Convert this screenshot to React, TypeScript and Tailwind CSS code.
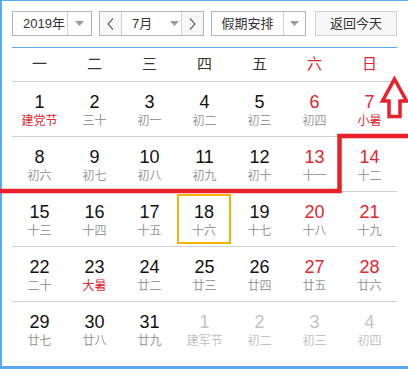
import React from 'react';

type Day = { n: number; l: string; red?: boolean; fest?: boolean; other?: boolean; today?: boolean };

const weeks: Day[][] = [
  [
    { n: 1, l: '建党节', fest: true },
    { n: 2, l: '三十' },
    { n: 3, l: '初一' },
    { n: 4, l: '初二' },
    { n: 5, l: '初三' },
    { n: 6, l: '初四', red: true },
    { n: 7, l: '小暑', red: true, fest: true },
  ],
  [
    { n: 8, l: '初六' },
    { n: 9, l: '初七' },
    { n: 10, l: '初八' },
    { n: 11, l: '初九' },
    { n: 12, l: '初十' },
    { n: 13, l: '十一', red: true },
    { n: 14, l: '十二', red: true },
  ],
  [
    { n: 15, l: '十三' },
    { n: 16, l: '十四' },
    { n: 17, l: '十五' },
    { n: 18, l: '十六', today: true },
    { n: 19, l: '十七' },
    { n: 20, l: '十八', red: true },
    { n: 21, l: '十九', red: true },
  ],
  [
    { n: 22, l: '二十' },
    { n: 23, l: '大暑', fest: true },
    { n: 24, l: '廿二' },
    { n: 25, l: '廿三' },
    { n: 26, l: '廿四' },
    { n: 27, l: '廿五', red: true },
    { n: 28, l: '廿六', red: true },
  ],
  [
    { n: 29, l: '廿七' },
    { n: 30, l: '廿八' },
    { n: 31, l: '廿九' },
    { n: 1, l: '建军节', other: true },
    { n: 2, l: '初二', other: true },
    { n: 3, l: '初三', other: true },
    { n: 4, l: '初四', other: true },
  ],
];

const weekdays = ['一', '二', '三', '四', '五', '六', '日'];

const Caret = () => (
  <svg width="9" height="5" viewBox="0 0 9 5">
    <path d="M0 0 L9 0 L4.5 5 Z" fill="#9a9a9a" />
  </svg>
);

const Chevron = ({ dir }: { dir: 'left' | 'right' }) => (
  <svg width="7" height="12" viewBox="0 0 7 12">
    <path
      d={dir === 'left' ? 'M6 0.5 L1 6 L6 11.5' : 'M1 0.5 L6 6 L1 11.5'}
      fill="none"
      stroke="#666"
      strokeWidth="1.2"
    />
  </svg>
);

const DayCell = ({ d }: { d: Day }) => {
  const numColor = d.other ? 'text-[#c2c2c2]' : d.red ? 'text-[#e0262f]' : 'text-[#111]';
  const lunarColor = d.other ? 'text-[#c2c2c2]' : d.fest ? 'text-[#e0262f]' : 'text-[#999]';
  const inner = (
    <>
      <div className={`text-[18px] leading-[20px] ${numColor}`}>{d.n}</div>
      <div className={`mt-px text-[12px] leading-[16px] ${lunarColor}`}>{d.l}</div>
    </>
  );
  if (d.today) {
    return (
      <div className="w-[55px]">
        <div className="mt-[2px] w-[54px] h-[50px] border-2 border-[#f5b400] pt-[6px] flex flex-col items-center">
          {inner}
        </div>
      </div>
    );
  }
  return <div className="w-[55px] pt-[10px] flex flex-col items-center">{inner}</div>;
};

export default function App() {
  return (
    <div className="relative w-[408px] h-[370px] overflow-hidden bg-white font-['Liberation_Sans','Noto_Sans_CJK_SC',sans-serif]">
      <div className="w-[430px] h-[369px] border-t border-l-2 border-b-[3px] border-[#5aa9f5] pl-[10px] pt-[10px]">
        {/* toolbar */}
        <div className="flex items-start h-[25px] text-[13px] text-[#333]">
          <div className="flex w-[80px] h-[25px] border border-[#b4b4b4] bg-white">
            <div className="w-[54px] flex items-center pl-[10px]">2019年</div>
            <div className="flex-1 flex items-center justify-center border-l border-[#d4d4d4]">
              <Caret />
            </div>
          </div>
          <div className="ml-[7px] flex w-[105px] h-[25px] border border-[#b4b4b4]">
            <div className="w-[22px] flex items-center justify-center bg-[#f7f7f7] border-r border-[#d4d4d4]">
              <Chevron dir="left" />
            </div>
            <div className="w-[59px] flex items-center bg-white">
              <span className="ml-[10px]">7月</span>
              <span className="ml-[18px] flex"><Caret /></span>
            </div>
            <div className="flex-1 flex items-center justify-center bg-[#f7f7f7] border-l border-[#d4d4d4]">
              <Chevron dir="right" />
            </div>
          </div>
          <div className="ml-[7px] flex w-[95px] h-[25px] border border-[#b4b4b4] bg-white">
            <div className="w-[71px] flex items-center justify-center">假期安排</div>
            <div className="flex-1 flex items-center justify-center border-l border-[#d4d4d4]">
              <Caret />
            </div>
          </div>
          <div className="ml-[9px] w-[82px] h-[25px] border border-[#d2d2d2] bg-[#f7f7f7] flex items-center justify-center">
            返回今天
          </div>
        </div>

        {/* calendar */}
        <div className="mt-[11px] w-[385px] border-t border-[#5aa9f5]">
          <div className="flex h-[34px] border-b border-[#cfcfcf] text-[15px]">
            {weekdays.map((w, i) => (
              <div
                key={w}
                className={`w-[55px] flex items-center justify-center ${i >= 5 ? 'text-[#e0262f]' : 'text-[#333]'}`}
              >
                {w}
              </div>
            ))}
          </div>
          {weeks.map((row, ri) => (
            <div
              key={ri}
              className={`flex h-[55px] ${ri < weeks.length - 1 ? 'border-b border-[#cfcfcf]' : ''}`}
            >
              {row.map((d, ci) => (
                <DayCell key={ci} d={d} />
              ))}
            </div>
          ))}
        </div>
      </div>

      {/* red annotation overlay */}
      <svg className="absolute left-0 top-0 pointer-events-none" width="408" height="370" viewBox="0 0 408 370">
        <path
          d="M0 191 L339.5 191 L339.5 136 L408 136"
          fill="none"
          stroke="#e8212b"
          strokeWidth="4.5"
          strokeLinejoin="miter"
        />
        <path
          d="M394.5 79 L406.5 101 L400 101 L400 116.5 L389 116.5 L389 101 L382.5 101 Z"
          fill="none"
          stroke="#e8212b"
          strokeWidth="3.5"
          strokeLinejoin="miter"
        />
      </svg>
    </div>
  );
}
